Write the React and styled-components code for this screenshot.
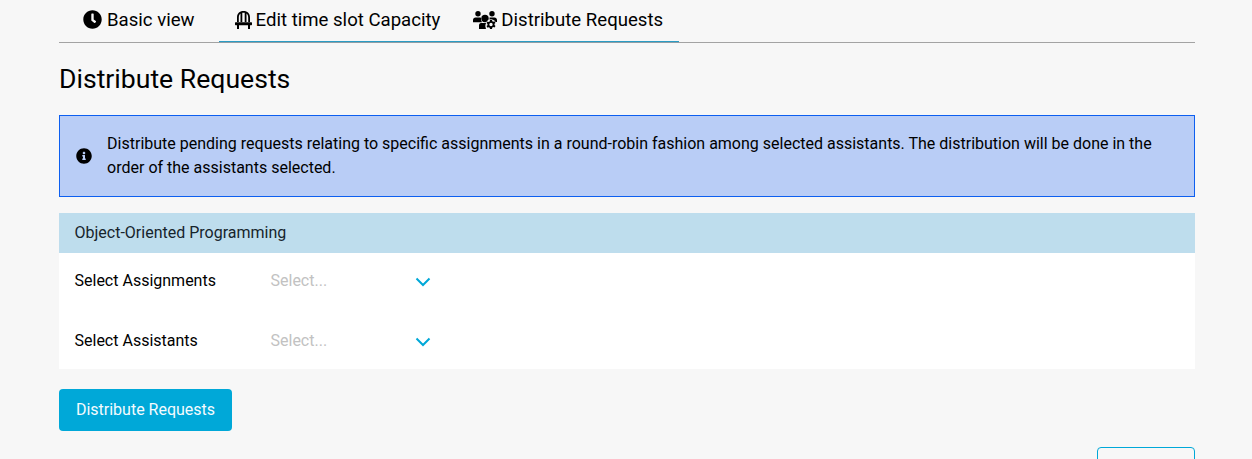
import React from "react";
import styled, { createGlobalStyle } from "styled-components";
import { FaClock, FaInfoCircle } from "react-icons/fa";

const Global = createGlobalStyle`
  html, body { margin: 0; padding: 0; background: #f7f7f7; overflow: hidden; }
  * { box-sizing: border-box; }
`;
const Page = styled.div`
  height: 459px;
  overflow: hidden;
  padding: 0 57px 0 59px;
  font-family: Roboto, "Liberation Sans", sans-serif;
  color: #000;
  font-size: 16px;
`;
const Tabs = styled.nav`
  display: flex;
  height: 43px;
  border-bottom: 1px solid #a3a3a3;
  position: relative;
`;
const Tab = styled.div`
  display: flex;
  align-items: center;
  gap: ${p => p.$gap}px;
  height: 39px;
  padding: 0 ${p => p.$right}px 0 ${p => p.$left}px;
  font-size: 18.6px;
  white-space: nowrap;
  svg { flex: none; }
  > svg:first-child { font-size: 19px; }
`;
const Indicator = styled.div`
  position: absolute;
  left: 160px;
  width: 460px;
  bottom: -1px;
  height: 2px;
  background: linear-gradient(#2b9cc4 50%, #8f9ea5 50%);
`;
const Title = styled.h1`
  margin: 20px 0 20px;
  font-size: 26.6px;
  font-weight: 400;
  line-height: 32px;
`;
const Notice = styled.div`
  display: flex;
  align-items: center;
  gap: 15.600px;
  height: 82px;
  padding: 0 15.500px;
  background: #b9cdf6;
  border: 1px solid #0d5ff0;
  font-size: 16px;
  line-height: 24px;
  svg { font-size: 16px; flex: none; }
`;
const Card = styled.section`
  margin-top: 16px;
  background: #fff;
`;
const CardHeader = styled.header`
  height: 40px;
  display: flex;
  align-items: center;
  padding: 0 15.500px 2px;
  background: #bedded;
  color: #16242c;
  font-size: 16px;
`;
const Rows = styled.div`
  height: 116px;
  padding: 0 15.500px;
  display: flex;
  flex-direction: column;
`;
const Row = styled.div`
  display: flex;
  flex: none;
  align-items: center;
  height: 60px;
  margin-top: ${p => p.$top}px;
`;
const Label = styled.label`
  width: 196px;
  flex: none;
`;
const SelectBox = styled.div`
  width: 160px;
  display: flex;
  align-items: center;
  justify-content: space-between;
  color: #c2c2c2;
`;
const Chevron = styled.svg`
  width: 16px;
  height: 10px;
  margin-top: 3px;
  fill: none;
  stroke: #00a8d8;
  stroke-width: 2;
`;
const Primary = styled.button`
  display: block;
  margin-top: 20px;
  width: 173px;
  height: 42px;
  padding: 0 0 2px;
  background: #00a8d8;
  color: #f4fbfe;
  border: 0;
  border-radius: 4px;
  font: 400 16px Roboto, "Liberation Sans", sans-serif;
`;
const Footer = styled.div`
  display: flex;
  justify-content: flex-end;
  margin-top: 16px;
`;
const Outline = styled.button`
  width: 98px;
  height: 42px;
  background: transparent;
  border: 1px solid #00a8d8;
  border-radius: 4px;
`;

function Select() {
  return (
    <SelectBox>
      Select...
      <Chevron viewBox="0 0 16 10"><path d="M1.5 1.500 8 8l6.500-6.500" /></Chevron>
    </SelectBox>
  );
}

function ChairIcon() {
  return (
    <svg width="17" height="18" viewBox="0 0 17 18">
      <path
        fillRule="evenodd"
        d="M2 11V6.500C2 2.500 4.500 0 8.500 0S15 2.500 15 6.500V11h-1.800V6.500c0-1.900-.7-3.200-1.700-4V11H9.700V1.800a7 7 0 0 0-2.400 0V11H5.500V2.500c-1 .8-1.700 2.100-1.700 4V11z"
      />
      <path d="M.6 11.200h15.800c.3 0 .6.300.6.600v1.800c0 .3-.3.600-.6.600H15V18h-2v-3.800H4V18H2v-3.800H.6c-.3 0-.6-.3-.6-.6v-1.800c0-.3.300-.6.600-.6z" />
    </svg>
  );
}

function UsersCogIcon() {
  return (
    <svg width="24" height="18" viewBox="0 0 24 18">
      <circle cx="5" cy="2.700" r="2.700" />
      <circle cx="19" cy="2.700" r="2.700" />
      <circle cx="12" cy="7.500" r="3.700" />
      <path d="M2.500 6.500h4.200c.5 0 1 .1 1.400.4A5.500 5.500 0 0 0 9 11.300H0V9c0-1.400 1.100-2.500 2.500-2.500z" />
      <path d="M16.500 6.500h5c1.400 0 2.500 1.100 2.500 2.500v2h-5.500a6 6 0 0 0-2.700-.2 5.500 5.500 0 0 0 .7-4.300z" />
      <path d="M8 12h5.200a6.200 6.200 0 0 0-.2 5.900V18H6v-3.400C6 13.200 6.800 12 8 12z" />
      <circle cx="18" cy="13.500" r="5.300" fill="#f7f7f7" />
      <path
        fillRule="evenodd"
        d="M17 9h2l.3 1.300 1 .5 1.200-.6 1 1.700-1 .9v1.200l1 .9-1 1.700-1.200-.6-1 .5L19 18h-2l-.3-1.300-1-.5-1.200.6-1-1.700 1-.9v-1.200l-1-.9 1-1.700 1.200.6 1-.5zm1 2.800a1.700 1.700 0 1 0 0 3.400 1.700 1.700 0 0 0 0-3.400z"
      />
    </svg>
  );
}

export default function App() {
  return (
    <Page>
      <Global />
      <Tabs>
        <Tab $left={24} $right={25} $gap={5}><FaClock />Basic view</Tab>
        <Tab $left={15} $right={33} $gap={4}><ChairIcon />Edit time slot Capacity</Tab>
        <Tab $left={0} $right={16} $gap={4}><UsersCogIcon />Distribute Requests</Tab>
        <Indicator />
      </Tabs>
      <Title>Distribute Requests</Title>
      <Notice>
        <FaInfoCircle />
        <span>Distribute pending requests relating to specific assignments in a round-robin fashion among selected assistants. The distribution will be done in the order of the assistants selected.</span>
      </Notice>
      <Card>
        <CardHeader>Object-Oriented Programming</CardHeader>
        <Rows>
          <Row $top={-3}><Label>Select Assignments</Label><Select /></Row>
          <Row $top={0}><Label>Select Assistants</Label><Select /></Row>
        </Rows>
      </Card>
      <Primary>Distribute Requests</Primary>
      <Footer><Outline aria-label="Next" /></Footer>
    </Page>
  );
}
